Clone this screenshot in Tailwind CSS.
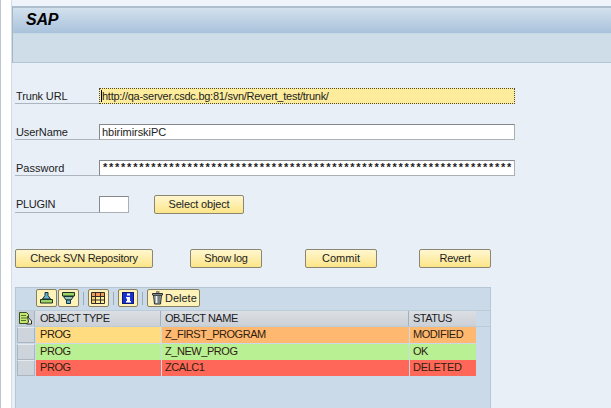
<!DOCTYPE html>
<html lang="en">
<head>
<meta charset="utf-8">
<title>SAP</title>
<script src="https://cdn.jsdelivr.net/npm/@tailwindcss/browser@4"></script>
</head>
<body class="w-[611px] h-[408px] overflow-hidden bg-white font-['Liberation_Sans',Arial,sans-serif] text-[11px] leading-[15px] text-[#1c1c22]">
<div class="flex h-full">
  <div class="w-[11px] shrink-0 border-l border-[#bcc5d3] bg-white"></div>
  <div class="flex-1 flex flex-col bg-[#e8eff7] border-l border-[#d5dce5] min-w-0">
    <div class="h-[6px] shrink-0 bg-[#eff4fa]"></div>
    <header class="shrink-0 border-l border-[#a3b7c5]">
      <div class="h-[27px] border-t-2 border-[#aebecd] bg-linear-to-b from-[#d3e1ed] via-[#bed1e4] to-[#a9c3dc] pl-[13px] pt-[3px]">
        <h1 class="text-[16px] leading-[18px] font-bold italic text-black tracking-[-0.2px]">SAP</h1>
      </div>
      <div class="h-[30px] border-t border-b border-t-[#c6dae6] border-b-[#b2c5d3] bg-[#cedde8]"></div>
    </header>
    <main class="flex-1 flex flex-col pl-[3px]">
      <div class="mt-[25px] flex h-[16px]">
        <label class="w-[84px] border-b border-[#abb4bf] pl-[1px] leading-[17px] tracking-[-0.15px]">Trunk URL</label>
        <div class="w-[416px] border border-dotted border-[#4b4a30] bg-[#fdec9c] pl-[2px] leading-[15px] relative"><span class="absolute left-[1px] top-[1px] w-px h-[12px] bg-black"></span><span class="tracking-[-0.26px]">http://qa-server.csdc.bg:81/svn/Revert_test/trunk/</span></div>
      </div>
      <div class="mt-[20px] flex h-[16px]">
        <label class="w-[84px] border-b border-[#abb4bf] pl-[1px] leading-[17px] tracking-[-0.1px]">UserName</label>
        <div class="w-[416px] border border-[#abb0b5] border-t-[#85898d] border-l-[#85898d] bg-white pl-[2px] leading-[15px] tracking-[-0.05px]">hbirimirskiPC</div>
      </div>
      <div class="mt-[20px] flex h-[16px]">
        <label class="w-[84px] border-b border-[#abb4bf] pl-[1px] leading-[17px]">Password</label>
        <div class="w-[416px] border border-[#abb0b5] border-t-[#85898d] border-l-[#85898d] bg-white pl-[3px] leading-[13px] overflow-hidden whitespace-nowrap tracking-[1.75px] font-bold">********************************************************************</div>
      </div>
      <div class="mt-[20px] flex h-[17px]">
        <label class="w-[84px] border-b border-[#abb4bf] pl-[1px] leading-[17px] tracking-[-0.3px]">PLUGIN</label>
        <div class="w-[30px] border border-[#abb0b5] border-t-[#85898d] border-l-[#85898d] bg-white"></div>
        <button class="ml-[25px] -mt-px w-[90px] h-[19px] rounded-[2px] border border-[#8b8674] bg-linear-to-b from-[#fff7cf] to-[#fce587] leading-[17px] tracking-[-0.15px]">Select object</button>
      </div>
      <div class="mt-[36px] flex h-[19px] leading-[17px] tracking-[-0.25px]">
        <button class="w-[138px] rounded-[2px] border border-[#8b8674] bg-linear-to-b from-[#fff7cf] to-[#fce587]">Check SVN Repository</button>
        <button class="ml-[37px] w-[72px] rounded-[2px] border border-[#8b8674] bg-linear-to-b from-[#fff7cf] to-[#fce587]">Show log</button>
        <button class="ml-[43px] w-[72px] rounded-[2px] border border-[#8b8674] bg-linear-to-b from-[#fff7cf] to-[#fce587] tracking-normal">Commit</button>
        <button class="ml-[42px] w-[72px] rounded-[2px] border border-[#8b8674] bg-linear-to-b from-[#fff7cf] to-[#fce587]">Revert</button>
      </div>
      <section class="mt-[19px] w-[476px] flex-1 border-t border-x border-[#b5c7d5] bg-[#cadae8]">
        <div class="flex h-[22px] pl-[20px] pt-[1px]">
          <button class="w-[21px] h-[18px] rounded-[2px] border border-[#858063] bg-[#fff3b9] flex items-center justify-center">
            <svg width="15" height="14" viewBox="0 0 15 14"><path d="M6 1.500h3v3l2.500 3.500h-8L6 4.500z" fill="#67b3d0" stroke="#17303d"/><path d="M1.500 8.500h12v3.500h-12z" fill="#9cd36a" stroke="#1d321c"/></svg>
          </button>
          <button class="ml-[1px] w-[21px] h-[18px] rounded-[2px] border border-[#858063] bg-[#fff3b9] flex items-center justify-center">
            <svg width="15" height="14" viewBox="0 0 15 14"><path d="M1.500 1.500h12v3.500h-12z" fill="#9cd36a" stroke="#1d321c"/><path d="M2.500 5.500h10l-2.500 3.500h-5z" fill="#9ac8b0" stroke="#17303d"/><path d="M5.500 9h4v3.500h-4z" fill="#67b3d0" stroke="#17303d"/></svg>
          </button>
          <span class="mx-[4px] mt-[3px] h-[13px] w-px bg-[#9eabb7]"></span>
          <button class="w-[21px] h-[18px] rounded-[2px] border border-[#858063] bg-[#fff3b9] flex items-center justify-center">
            <svg width="15" height="14" viewBox="0 0 15 14"><path d="M1 2h13v11H1z" fill="#fff0a0"/><path d="M1 2h13v3H1z" fill="#ef9c5a"/><path d="M1 5h4v8H1z" fill="#f8cf68"/><path d="M.5 1.500h13v11H.5zM.5 5.500h13M.5 9h13M4.500 1.500v11M9.500 1.500v11" fill="none" stroke="#322d27"/></svg>
          </button>
          <span class="mx-[4px] mt-[3px] h-[13px] w-px bg-[#9eabb7]"></span>
          <button class="w-[20px] h-[18px] rounded-[2px] border border-[#858063] bg-[#fff3b9] flex items-center justify-center">
            <svg width="14" height="14" viewBox="0 0 14 14"><path d="M1 1h12v12H1z" fill="#1732d0"/><path d="M1.500 1.500h11v11h-11z" fill="none" stroke="#0b1878"/><path d="M6 2.500h3v2H6zM5 6h4v4h1v1.500H5V10h1V7.500H5z" fill="#fff"/></svg>
          </button>
          <span class="mx-[4px] mt-[3px] h-[13px] w-px bg-[#9eabb7]"></span>
          <button class="w-[53px] h-[18px] rounded-[2px] border border-[#858063] bg-[#fff3b9] flex items-center pl-[4px] leading-[16px]">
            <svg width="11" height="14" viewBox="0 0 11 14"><path d="M1.500 4h8l-1 9h-6z" fill="#a2adb0" stroke="#272d31"/><path d="M.500 2.500h10v1.500H.500zM4 1h3.500" fill="#d6dbdc" stroke="#272d31"/><path d="M4.500 5v7" stroke="#eef2f3"/><path d="M7 5v7" stroke="#4d575c"/></svg>
            <span class="ml-[2px]">Delete</span>
          </button>
        </div>
        <div class="border-y border-[#b9ccd7] h-[17px] pl-[1px] flex gap-x-px leading-[15px] tracking-[-0.48px]">
          <div class="w-[18px] bg-[#c6ced7] border-r border-[#abb5bf] pl-px">
            <svg width="15" height="15" viewBox="0 0 15 15"><path d="M1.500 1.500h7l2 2v9h-9z" fill="#cbe56a" stroke="#33502a"/><path d="M3 4.500h5M3 7h6M3 9.500h5" stroke="#47753a"/><path d="M9.500 5.500l4 4.500v3h-5l2-2z" fill="#f7f4d9" stroke="#252d25"/></svg>
          </div>
          <div class="w-[125px] bg-linear-to-b from-[#dce0e5] to-[#cbd0d6] pl-[4px] border-r border-[#a8afb7]">OBJECT TYPE</div>
          <div class="w-[247px] bg-linear-to-b from-[#dce0e5] to-[#cbd0d6] pl-[3px] border-r border-[#a8afb7]">OBJECT NAME</div>
          <div class="w-[66px] bg-linear-to-b from-[#dce0e5] to-[#cbd0d6] pl-[3px]">STATUS</div>
        </div>
        <div class="pl-[1px] grid grid-cols-[18px_125px_247px_66px] auto-rows-[16px] gap-x-px gap-y-[0.5px] leading-[15px] text-[#30200f] tracking-[-0.45px]">
          <div class="border border-[#abb5bf] border-t-[#e6eaef] bg-[#cdd4dc]"></div>
          <div class="bg-[#ffdc80] pl-[4px]">PROG</div><div class="bg-[#ffb870] pl-[3px]">Z_FIRST_PROGRAM</div><div class="bg-[#ffb870] pl-[3px]">MODIFIED</div>
          <div class="border border-[#abb5bf] border-t-[#e6eaef] bg-[#cdd4dc]"></div>
          <div class="bg-[#b9f094] pl-[4px]">PROG</div><div class="bg-[#b9f094] pl-[3px]">Z_NEW_PROG</div><div class="bg-[#b9f094] pl-[3px]">OK</div>
          <div class="border border-[#abb5bf] border-t-[#e6eaef] bg-[#cdd4dc]"></div>
          <div class="bg-[#ff6858] pl-[4px]">PROG</div><div class="bg-[#ff6858] pl-[3px]">ZCALC1</div><div class="bg-[#ff6858] pl-[3px] tracking-[-0.3px]">DELETED</div>
        </div>
      </section>
    </main>
  </div>
</div>
</body>
</html>
